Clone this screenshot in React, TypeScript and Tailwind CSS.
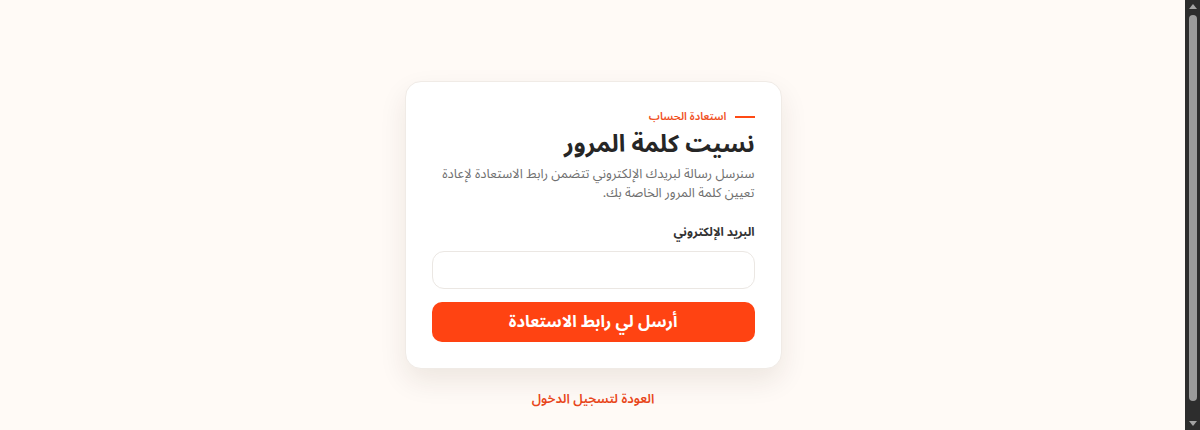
const ScrollBar = () => (
  <div className="w-[15px] h-full bg-[#2d2d2d] flex flex-col items-center py-[4px]">
    <div className="w-0 h-0 border-x-[4px] border-x-transparent border-b-[5px] border-b-[#a3a3a3]" />
    <div className="mt-[6px] w-[8px] flex-1 rounded-full bg-[#9c9c9c]" />
    <div className="mt-[20px] w-0 h-0 border-x-[4px] border-x-transparent border-t-[5px] border-t-[#a3a3a3]" />
  </div>
);

export default function App() {
  return (
    <div className="h-[430px] w-full flex overflow-hidden">
      <div
        dir="rtl"
        className="flex-1 h-full bg-[#fffaf6] flex flex-col items-center pt-[81px] pl-[1px]"
        style={{ fontFamily: '"Noto Sans Arabic", "Noto Sans", "DejaVu Sans", sans-serif' }}
      >
        <div className="w-[377px] rounded-2xl bg-white border border-[#f0ebe6] shadow-[0_12px_28px_rgba(60,30,10,0.09)] px-[26px] pt-[26px] pb-[26px]">
          <div className="flex items-center gap-2 text-[11px] leading-[18px] font-semibold text-[#f0501e]">
            <span className="block w-5 h-[2px] bg-[#ff4a14]" />
            <span>استعادة الحساب</span>
          </div>
          <h1 className="mt-[3px] text-[24px] font-bold text-[#262626] leading-[32px]">نسيت كلمة المرور</h1>
          <p className="mt-[4px] text-[13px] leading-[19px] text-[#6f6f6f]">
            سنرسل رسالة لبريدك الإلكتروني تتضمن رابط الاستعادة لإعادة تعيين كلمة المرور الخاصة بك.
          </p>
          <label className="block mt-[21px] text-[12px] leading-[18px] font-bold text-[#333]">
            البريد الإلكتروني
          </label>
          <input
            type="email"
            className="mt-[9px] block w-full h-[38px] rounded-xl border border-[#ebe7e3] bg-white outline-none"
          />
          <button className="mt-[13px] block w-full h-[40px] rounded-[10px] bg-[#ff4312] text-white text-[16.5px] font-bold">
            أرسل لي رابط الاستعادة
          </button>
        </div>
        <a className="mt-[21px] text-[13px] leading-[18px] font-semibold text-[#e8461a]">العودة لتسجيل الدخول</a>
      </div>
      <ScrollBar />
    </div>
  );
}
